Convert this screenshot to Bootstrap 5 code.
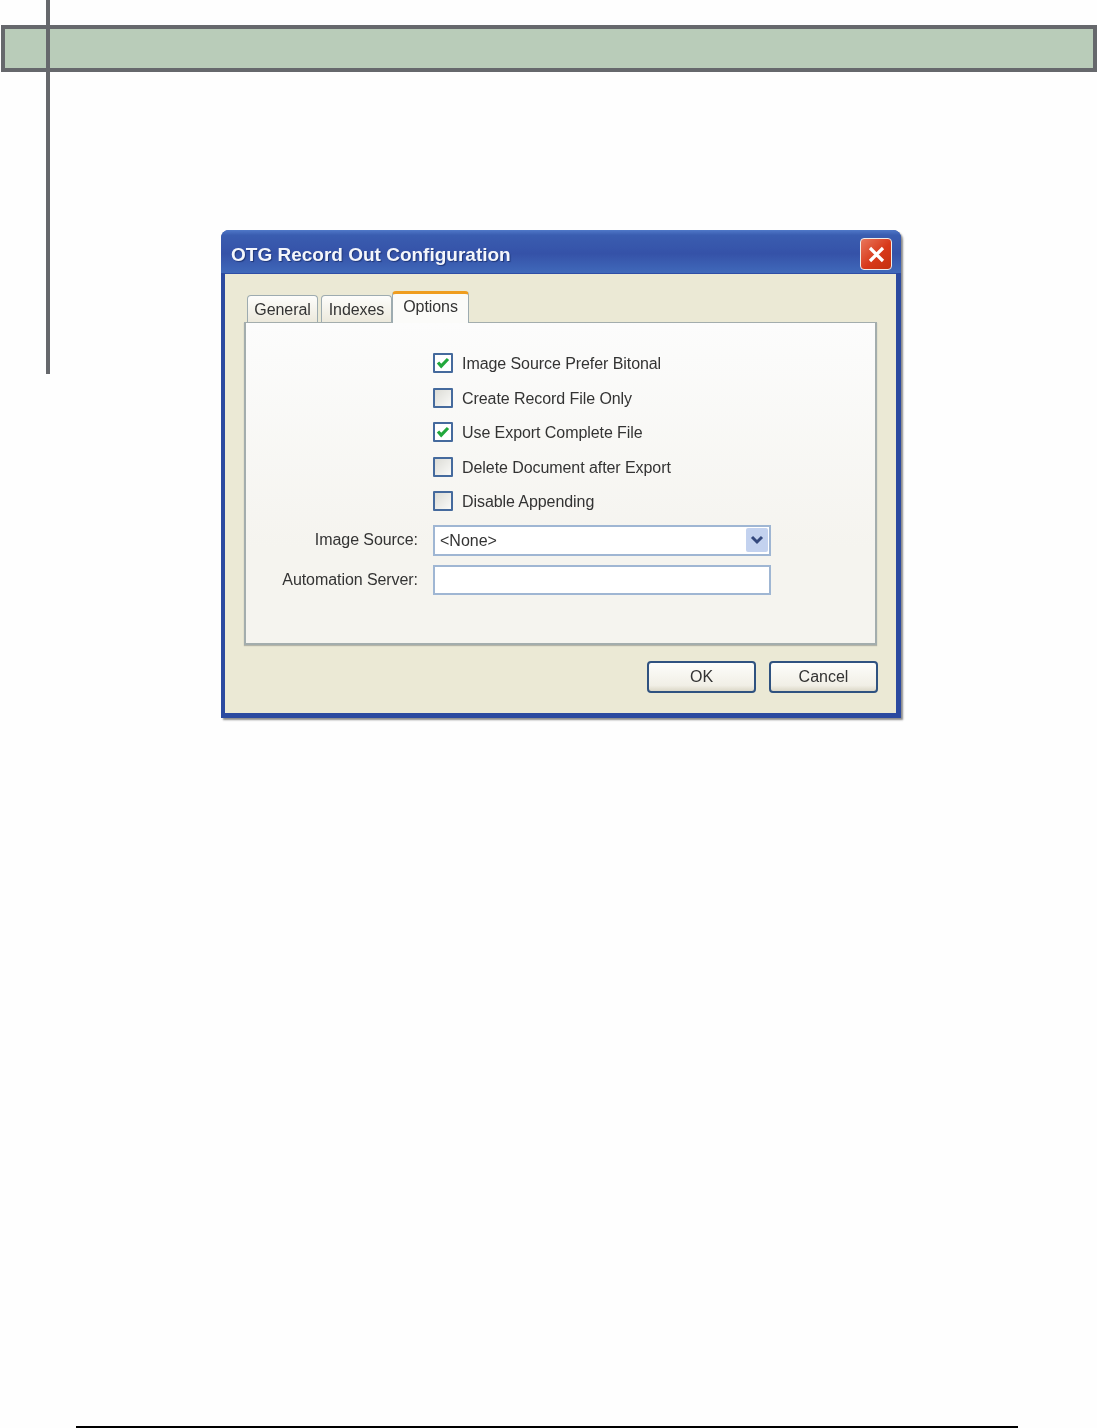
<!DOCTYPE html>
<html lang="en">
<head>
<meta charset="utf-8">
<title>OTG Record Out Configuration</title>
<link href="https://cdn.jsdelivr.net/npm/bootstrap@5.3.0/dist/css/bootstrap.min.css" rel="stylesheet">
<style>
html,body{height:1428px;overflow:hidden;background:#fefefe;}
.page-wrap{position:relative;height:1428px;padding-top:25px;}
.rule-v{position:absolute;left:46px;top:0;width:4px;height:374px;background:#66686c;}
.band{height:47px;margin-left:1px;background:#b9ccb9;border:4px solid #66686c;}
.dlg{width:680px;height:488px;margin:158px 0 0 221px;filter:blur(.45px);border-radius:8px 8px 0 0;box-shadow:2px 2px 2px #8b8b8b;background:#2b4aa0;display:flex;flex-direction:column;font-family:"Liberation Sans",Arial,sans-serif;font-size:16px;letter-spacing:-.07px;color:#333;}
.dlg-title{height:43px;padding:8px 9px 0 10px;border-radius:8px 8px 0 0;background:linear-gradient(#4f78c8 0,#3a5db0 12%,#3552a8 55%,#4069ba 100%);}
.dlg-name{font-weight:700;font-size:19px;letter-spacing:0;color:#f4f6fb;text-shadow:1px 1px 1px #1f3677;}
.dlg-close{width:32px;height:32px;margin-top:-3px;border:1px solid #f0ece8;border-radius:4px;background:linear-gradient(135deg,#e8775c,#d8391a 55%,#c4300f);}
.dlg-main{flex:1;margin:0 5px 5px 4px;padding:16px 18px 0 19px;background:#ebe9d5;border-top:1px solid #2f4ea6;}
.tab-strip{height:32px;gap:3px;padding-left:3px;border:0;flex-wrap:nowrap;}
.tab-item{height:27px;margin-top:5px;padding:3px 0 0;text-align:center;border:1px solid #9dabb0;border-bottom:0;border-radius:4px 4px 0 0;background:linear-gradient(#fdfdfb,#ece9dc);font-size:16px;line-height:22px;color:#333;}
.tab-a{width:71px;}
.tab-b{width:71px;}
.tab-c{position:relative;z-index:1;width:77px;height:32px;margin:1px 0 -1px -3px;padding-top:2px;background:#fbfbf9;border-top:3px solid #ef9d1f;}
.tab-panel{height:323px;width:633px;padding:23px 0 0;background:linear-gradient(#fcfcfc,#f5f4ef 70%);border:2px solid #a3adad;border-top-width:1px;box-shadow:0 1px 1px #b5b5a8;}
.opt-row{height:34.5px;margin:0 0 0 187px;gap:9px;}
.opt-box.form-check-input{width:20px;height:20px;margin:0;flex:none;border:2px solid #456a9d;border-radius:1px;background:linear-gradient(135deg,#dcdcd6,#fafaf8);}
.opt-box.form-check-input:checked{border-color:#456a9d;background-color:#fff;background-image:url("data:image/svg+xml,%3Csvg xmlns='http://www.w3.org/2000/svg' viewBox='0 0 16 16'%3E%3Cpath d='M3 7.5l3.2 3.6L13 4' fill='none' stroke='%2322a83c' stroke-width='3.2'/%3E%3C/svg%3E");background-size:100% 100%;}
.opt-box.form-check-input:focus{box-shadow:none;border-color:#456a9d;}
.opt-text{margin:0;padding-top:2px;line-height:20px;color:#333;}
.fld-row{width:525px;margin-top:6px;}
.fld-label{width:172px;margin:0 15px 0 0;flex:none;text-align:right;color:#333;}
.fld-select,.fld-input{width:338px;flex:none;border:2px solid #9fb6d3;border-radius:0;font-size:16px;color:#333;background-color:#fff;}
.fld-select{height:31px;padding:0 0 0 5px;line-height:27px;background-image:url("data:image/svg+xml,%3Csvg xmlns='http://www.w3.org/2000/svg' viewBox='0 0 22 24'%3E%3Crect width='22' height='24' rx='2' fill='%23c3d2ef'/%3E%3Cpath d='M6 9l5 5 5-5' fill='none' stroke='%2334497e' stroke-width='3'/%3E%3C/svg%3E");background-size:22px 24px;background-position:right 1px center;}
.fld-input{height:30px;padding:0 5px;}
.fld-select:focus,.fld-input:focus{box-shadow:none;border-color:#9fb6d3;}
.fld-row.fld-gap{margin-top:9px;}
.act-row{gap:13px;padding:16px 0 0;width:634px;}
.act-btn{width:109px;height:32px;padding:0;border:2px solid #2f5280;border-radius:4px;background:linear-gradient(#fdfdfb,#f1efe6 80%,#dcd8c8);font-size:16px;line-height:26px;color:#333;}
.foot-rule{height:2px;width:942px;margin:708px 0 0 76px;background:#000;}
</style>
</head>
<body>
<div class="page-wrap">
  <div class="band"></div>
  <div class="rule-v"></div>
  <div class="dlg">
    <div class="dlg-title d-flex align-items-center justify-content-between">
      <span class="dlg-name">OTG Record Out Configuration</span>
      <span class="dlg-close d-flex align-items-center justify-content-center">
        <svg width="21" height="21" viewBox="0 0 21 21"><path d="M4 4l13 13M17 4L4 17" stroke="#fff" stroke-width="3.2" fill="none"/></svg>
      </span>
    </div>
    <div class="dlg-main">
      <div class="tab-strip nav">
        <span class="tab-item tab-a">General</span>
        <span class="tab-item tab-b">Indexes</span>
        <span class="tab-item tab-c">Options</span>
      </div>
      <div class="tab-panel">
        <div class="opt-row d-flex align-items-center"><input class="opt-box form-check-input" type="checkbox" id="o1" checked><label class="opt-text" for="o1">Image Source Prefer Bitonal</label></div>
        <div class="opt-row d-flex align-items-center"><input class="opt-box form-check-input" type="checkbox" id="o2"><label class="opt-text" for="o2">Create Record File Only</label></div>
        <div class="opt-row d-flex align-items-center"><input class="opt-box form-check-input" type="checkbox" id="o3" checked><label class="opt-text" for="o3">Use Export Complete File</label></div>
        <div class="opt-row d-flex align-items-center"><input class="opt-box form-check-input" type="checkbox" id="o4"><label class="opt-text" for="o4">Delete Document after Export</label></div>
        <div class="opt-row d-flex align-items-center"><input class="opt-box form-check-input" type="checkbox" id="o5"><label class="opt-text" for="o5">Disable Appending</label></div>
        <div class="fld-row d-flex align-items-center"><label class="fld-label" for="f1">Image Source:</label><select class="fld-select form-select" id="f1"><option>&lt;None&gt;</option></select></div>
        <div class="fld-row fld-gap d-flex align-items-center"><label class="fld-label" for="f2">Automation Server:</label><input class="fld-input form-control" type="text" id="f2"></div>
      </div>
      <div class="act-row d-flex justify-content-end">
        <button type="button" class="act-btn btn">OK</button>
        <button type="button" class="act-btn btn">Cancel</button>
      </div>
    </div>
  </div>
  <div class="foot-rule"></div>
</div>
<script src="https://cdn.jsdelivr.net/npm/bootstrap@5.3.0/dist/js/bootstrap.bundle.min.js"></script>
</body>
</html>
